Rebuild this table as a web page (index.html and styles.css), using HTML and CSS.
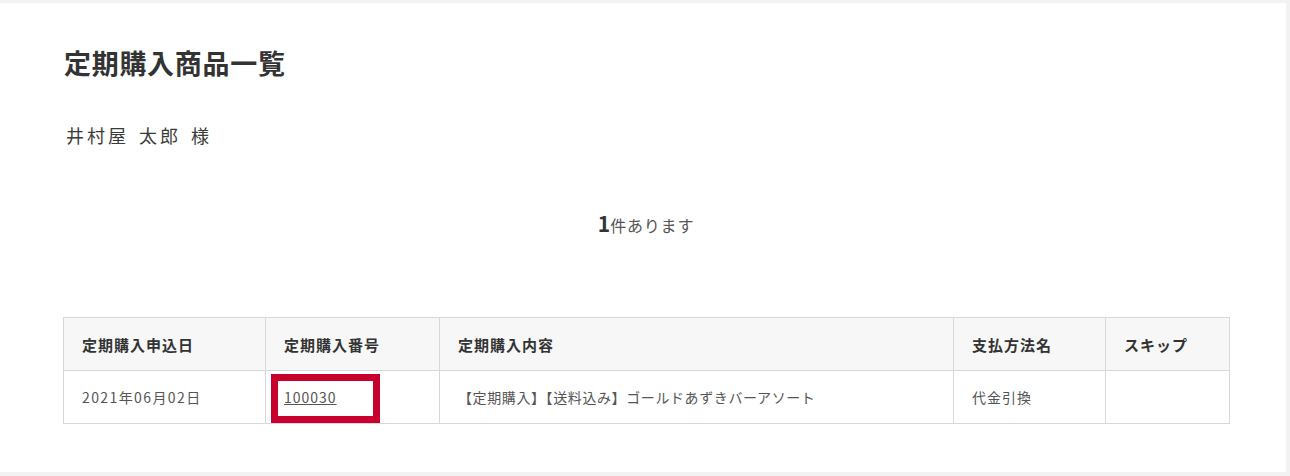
FILE: index.html
```html
<!DOCTYPE html>
<html lang="ja">
<head>
<meta charset="utf-8">
<title>定期購入商品一覧</title>
<link rel="stylesheet" href="styles.css">
</head>
<body>
<div class="panel">
  <h1 class="title">定期購入商品一覧</h1>
  <p class="customer">井村屋 太郎 様</p>
  <p class="count"><span class="count-num">1</span>件あります</p>
  <table class="list">
    <colgroup>
      <col class="c1"><col class="c2"><col class="c3"><col class="c4"><col class="c5">
    </colgroup>
    <thead>
      <tr>
        <th>定期購入申込日</th>
        <th>定期購入番号</th>
        <th>定期購入内容</th>
        <th>支払方法名</th>
        <th>スキップ</th>
      </tr>
    </thead>
    <tbody>
      <tr>
        <td class="date">2021年06月02日</td>
        <td class="num-cell"><a href="#" class="num-link">100030</a><span class="highlight"></span></td>
        <td class="content">【定期購入】【送料込み】ゴールドあずきバーアソート</td>
        <td>代金引換</td>
        <td></td>
      </tr>
    </tbody>
  </table>
</div>
</body>
</html>
```
FILE: styles.css
```css
html, body {
  margin: 0;
  padding: 0;
}
body {
  background: #f2f2f2;
  font-family: "Noto Sans CJK JP", "Noto Sans", sans-serif;
  color: #333;
  width: 1290px;
  height: 476px;
  overflow: hidden;
}
.panel {
  margin-top: 3px;
  width: 1286px;
  height: 469px;
  background: #fff;
  box-sizing: border-box;
  padding: 40px 0 0 63px;
}
.title {
  margin: 0 0 0 1px;
  font-size: 27px;
  line-height: 40px;
  font-weight: 700;
  letter-spacing: 0.7px;
  color: #333;
}
.customer {
  margin: 37px 0 0 3px;
  font-size: 18px;
  line-height: 30px;
  letter-spacing: 3px;
  word-spacing: 3px;
  color: #3a3a3a;
}
.count {
  margin: 58px 0 0 0;
  width: 1166px;
  text-align: center;
  font-size: 16px;
  line-height: 30px;
  letter-spacing: 0.8px;
  color: #555;
}
.count-num {
  font-size: 21px;
  font-weight: 700;
  color: #333;
  letter-spacing: 0;
}
.list {
  margin-top: 77px;
  width: 1166px;
  border-collapse: collapse;
  table-layout: fixed;
}
.c1 { width: 202px; }
.c2 { width: 174px; }
.c3 { width: 514px; }
.c4 { width: 152px; }
.c5 { width: 124px; }
.list th, .list td {
  border: 1px solid #d8d8d8;
  text-align: left;
  padding: 0 0 0 18px;
  white-space: nowrap;
}
.list th {
  height: 52px;
  background: #f7f7f7;
  font-size: 15px;
  font-weight: 700;
  letter-spacing: 1px;
  color: #333;
}
.list td {
  height: 52px;
  font-size: 14px;
  letter-spacing: 1px;
  color: #555;
}
.list td.date {
  letter-spacing: 1.4px;
}
.list td.content {
  letter-spacing: 0.6px;
}
.num-cell {
  position: relative;
}
.num-link {
  color: #555;
  text-decoration: underline;
}
.highlight {
  position: absolute;
  left: 5px;
  top: 3px;
  width: 109px;
  height: 49px;
  box-sizing: border-box;
  border: 7px solid #c8002d;
}
```
